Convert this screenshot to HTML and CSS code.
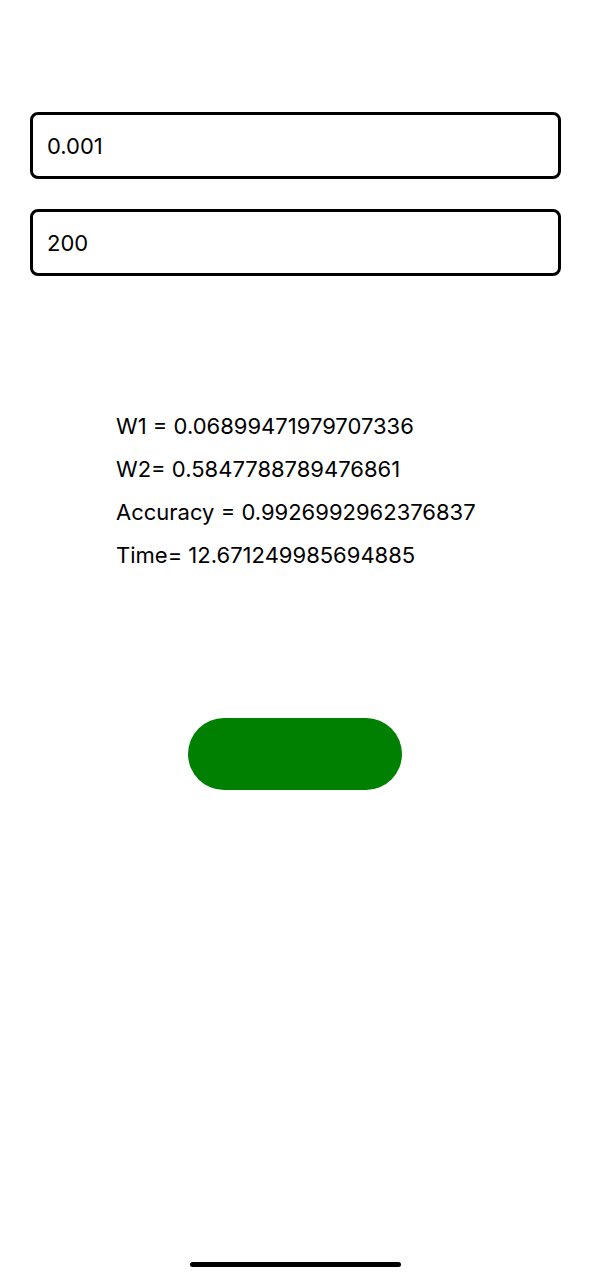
FILE: index.html
```html
<!DOCTYPE html>
<html>
<head>
<meta charset="utf-8">
<link rel="stylesheet" href="styles.css">
</head>
<body>
<div class="screen">
  <div class="inputs">
    <div class="field">0.001</div>
    <div class="field">200</div>
  </div>
  <div class="results">
    <div class="line">W1 = 0.06899471979707336</div>
    <div class="line">W2= 0.5847788789476861</div>
    <div class="line">Accuracy = 0.9926992962376837</div>
    <div class="line">Time= 12.671249985694885</div>
  </div>
  <div class="action">
    <div class="button"></div>
  </div>
  <div class="home"><div class="bar"></div></div>
</div>
</body>
</html>
```

FILE: styles.css
```css
html, body {
  margin: 0;
  padding: 0;
  background: #fff;
}
.screen {
  width: 591px;
  height: 1280px;
  display: flex;
  flex-direction: column;
  font-family: Inter, "Noto Sans", sans-serif;
  color: #000;
}
.inputs {
  padding: 112px 30px 0 30px;
  display: flex;
  flex-direction: column;
  gap: 30px;
}
.field {
  height: 61px;
  border: 3px solid #000;
  border-radius: 8px;
  padding-left: 14px;
  display: flex;
  align-items: center;
  font-size: 22px;
}
.results {
  margin-top: 129px;
  padding-left: 116px;
  display: flex;
  flex-direction: column;
}
.line {
  font-size: 22px;
  line-height: 43px;
}
.action {
  margin-top: 141px;
  display: flex;
  padding-left: 188px;
}
.button {
  width: 214px;
  height: 72px;
  border-radius: 36px;
  background: #008000;
}
.home {
  margin-top: auto;
  padding-bottom: 13px;
  display: flex;
  justify-content: center;
}
.bar {
  width: 211px;
  height: 5px;
  border-radius: 3px;
  background: #000;
}
```
